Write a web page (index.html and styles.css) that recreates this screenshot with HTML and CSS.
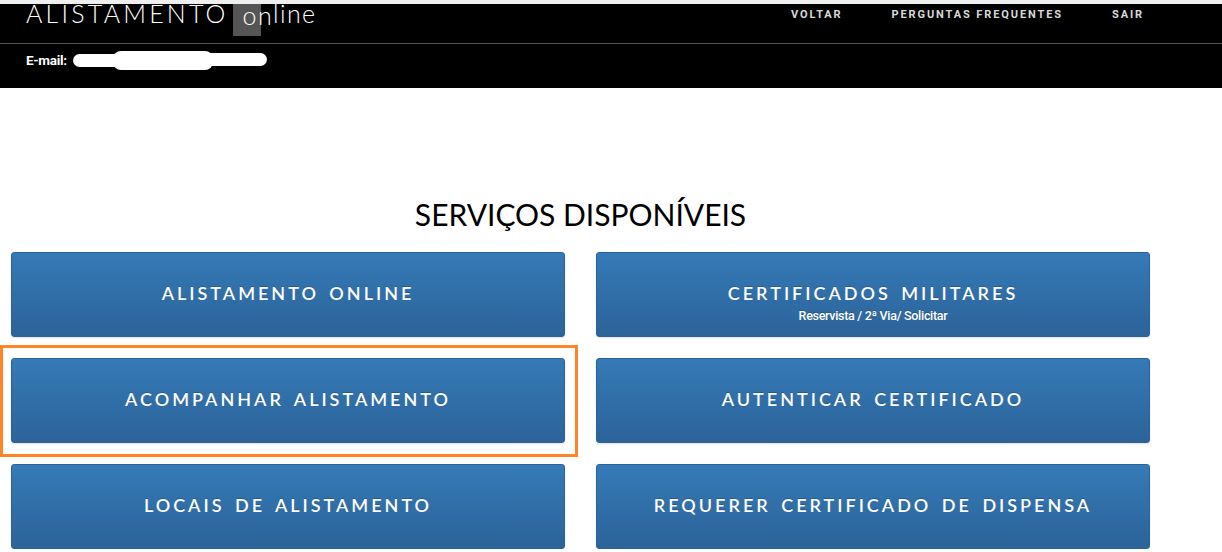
FILE: index.html
```html
<!DOCTYPE html>
<html lang="pt-BR">
<head>
  <meta charset="UTF-8" />
  <meta name="viewport" content="width=device-width, initial-scale=1.0"/>
  <title>Alistamento Online</title>
  <link rel="stylesheet" href="styles.css">
</head>
<body>
  <div class="topstrip"></div>
  <header class="header">
    <div class="header-top">
      <div class="brand"><span class="brand-main">ALISTAMENTO</span><span class="brand-sel">on</span>line</div>
      <nav class="nav">
        <a href="#">VOLTAR</a>
        <a href="#">PERGUNTAS FREQUENTES</a>
        <a href="#">SAIR</a>
      </nav>
    </div>
    <div class="header-user">
      <b>E-mail:</b>
      <span class="hidden-mail"><span></span><span></span><span></span></span>
    </div>
  </header>

  <main class="content">
    <h2 class="title">SERVIÇOS DISPONÍVEIS</h2>
    <div class="services">
      <a class="service" href="#">ALISTAMENTO ONLINE</a>
      <a class="service" href="#">CERTIFICADOS MILITARES<small>Reservista / 2ª Via/ Solicitar</small></a>
      <div class="focus-ring"><a class="service" href="#">ACOMPANHAR ALISTAMENTO</a></div>
      <a class="service" href="#">AUTENTICAR CERTIFICADO</a>
      <a class="service" href="#">LOCAIS DE ALISTAMENTO</a>
      <a class="service" href="#">REQUERER CERTIFICADO DE DISPENSA</a>
    </div>
  </main>
</body>
</html>
```

FILE: styles.css
```css
body {
  margin: 0;
  background: #fff;
  font-family: Lato, "Open Sans", sans-serif;
  overflow: hidden;
}
.topstrip {
  height: 4px;
  background: #efefef;
}
.header {
  background: #000;
  color: #fff;
  height: 84px;
}
.header-top {
  display: flex;
  height: 40px;
  border-bottom: 1px solid #555;
  box-sizing: border-box;
}
.brand {
  display: flex;
  align-items: flex-start;
  font-family: Lato, sans-serif;
  font-weight: 300;
  font-size: 25px;
  letter-spacing: 1.4px;
  line-height: 22px;
  padding-left: 26px;
  margin-top: -2px;
  width: 740px;
}
.brand-main {
  letter-spacing: 3.2px;
  margin-right: 4px;
}
/* highlight only reaches halfway into the "n" */
.brand-sel {
  background: linear-gradient(#555, #555) no-repeat left top / 28px 100%;
  padding: 0 0 10px 10px;
  margin-top: 2px;
}
.nav {
  display: flex;
  gap: 49px;
  padding-left: 25px;
  padding-top: 4px;
}
.nav a {
  color: #d9d9d9;
  text-decoration: none;
  font-family: Roboto, sans-serif;
  font-weight: bold;
  font-size: 11px;
  letter-spacing: 1.9px;
}
.header-user {
  display: flex;
  align-items: center;
  padding: 6px 0 0 26px;
  font-family: Roboto, sans-serif;
  font-size: 13.5px;
  letter-spacing: -0.3px;
}
.hidden-mail {
  position: relative;
  display: inline-block;
  width: 194px;
  height: 20px;
  margin-left: 6px;
  filter: blur(0.7px);
}
.hidden-mail span {
  position: absolute;
  background: #fff;
  border-radius: 8px;
}
.hidden-mail span:nth-child(1) { left: 0; top: 4px; width: 60px; height: 13px; }
.hidden-mail span:nth-child(2) { left: 40px; top: 1px; width: 100px; height: 19px; }
.hidden-mail span:nth-child(3) { left: 120px; top: 3px; width: 74px; height: 13px; }

.content {
  padding: 109px 0 0 11px;
  width: 1139px;
}
.title {
  margin: 0 0 21px;
  text-align: center;
  font-family: Lato, sans-serif;
  font-weight: 400;
  font-size: 30px;
  line-height: 34px;
  color: #000;
}
.services {
  display: grid;
  grid-template-columns: 554px 554px;
  column-gap: 31px;
  row-gap: 21px;
}
.service {
  display: flex;
  flex-direction: column;
  align-items: center;
  box-sizing: border-box;
  height: 85px;
  padding-top: 29px;
  border-radius: 3px;
  border: 1px solid #2a629a;
  background: linear-gradient(to bottom, #357ab7 0%, #2c6399 100%);
  box-shadow: 0 1px 2px rgba(0,0,0,0.12);
  color: #fff;
  text-decoration: none;
  font-family: Lato, sans-serif;
  font-weight: 600;
  font-size: 18px;
  letter-spacing: 3px;
  word-spacing: 3px;
  text-shadow: 0 -1px 0 rgba(0,0,0,0.2);
}
.service small {
  font-family: Roboto, sans-serif;
  font-weight: 500;
  font-size: 12.5px;
  letter-spacing: -0.3px;
  word-spacing: 0;
  margin-top: 4px;
}
.focus-ring {
  position: relative;
}
.focus-ring::before {
  content: "";
  position: absolute;
  left: -11px;
  top: -13px;
  right: -13px;
  bottom: -14px;
  border: 3px solid #ff8527;
}
```
